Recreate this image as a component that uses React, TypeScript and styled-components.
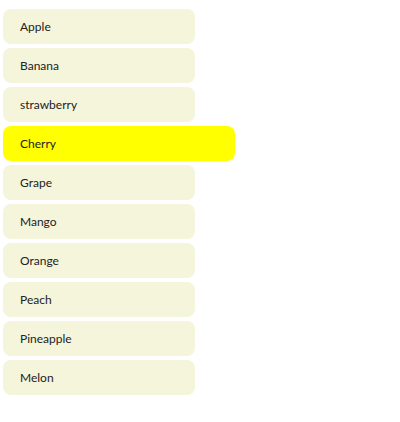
import React from "react";
import styled, { createGlobalStyle } from "styled-components";

const Global = createGlobalStyle`
  html, body { margin: 0; padding: 0; background: #ffffff; }
  body { font-family: Lato, "Noto Sans", sans-serif; }
`;

const List = styled.ul`
  list-style: none;
  margin: 0;
  padding: 9px 0 0 3px;
  display: flex;
  flex-direction: column;
  align-items: flex-start;
  gap: 4px;
`;

const Item = styled.li<{ $active?: boolean }>`
  box-sizing: border-box;
  width: ${(p) => (p.$active ? 232 : 192)}px;
  height: 35px;
  padding-left: 17px;
  display: flex;
  align-items: center;
  border-radius: 8px;
  background: ${(p) => (p.$active ? "#ffff00" : "#f5f5dc")};
  color: #222222;
  font-size: 12px;
`;

const fruits = [
  "Apple",
  "Banana",
  "strawberry",
  "Cherry",
  "Grape",
  "Mango",
  "Orange",
  "Peach",
  "Pineapple",
  "Melon",
];

export default function App() {
  return (
    <>
      <Global />
      <List>
        {fruits.map((f) => (
          <Item key={f} $active={f === "Cherry"}>
            {f}
          </Item>
        ))}
      </List>
    </>
  );
}
